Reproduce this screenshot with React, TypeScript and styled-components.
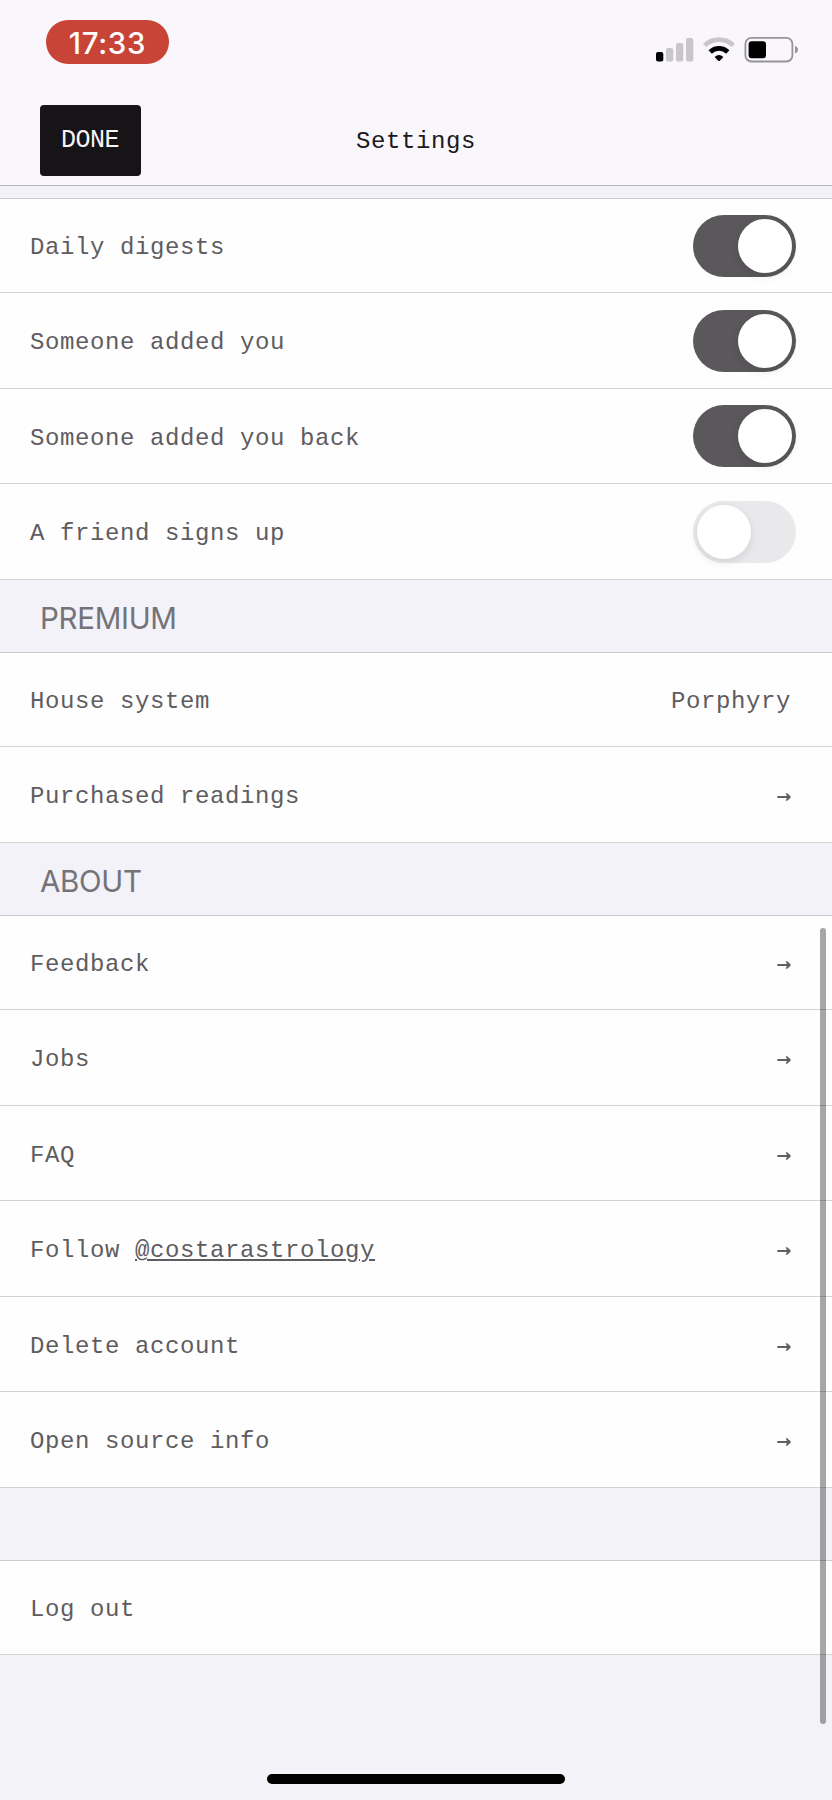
import React from "react";
import styled, { createGlobalStyle } from "styled-components";

const MONO = '"Liberation Mono", "DejaVu Sans Mono", monospace';
const SANS = 'Inter, "Liberation Sans", sans-serif';

const GlobalStyle = createGlobalStyle`
  * { box-sizing: border-box; }
  body { margin: 0; background: #f3f2f9; }
`;

const Screen = styled.div`
  position: relative;
  display: flex;
  flex-direction: column;
  width: 832px;
  height: 1800px;
  overflow: hidden;
  background: #f3f2f9;
`;

const Header = styled.header`
  height: 186px;
  flex: none;
  background: #f9f7fb;
  border-bottom: 1px solid #b5b3bb;
`;

const StatusBar = styled.div`
  display: flex;
  justify-content: space-between;
  align-items: flex-start;
  height: 105px;
  padding: 20px 33px 0 46px;
`;

const TimePill = styled.div`
  display: flex;
  align-items: center;
  justify-content: center;
  width: 123px;
  height: 44px;
  padding-top: 1px;
  border-radius: 22px;
  background: #c74437;
  color: #fff;
  font: 500 29.5px/44px ${SANS};
  letter-spacing: 0.7px;
`;

const StatusIcons = styled.svg`
  display: block;
  margin-top: 16px;
`;

const NavBar = styled.div`
  display: grid;
  grid-template-columns: 101px 1fr 101px;
  align-items: center;
  height: 71px;
  padding: 0 40px;
`;

const DoneButton = styled.button`
  height: 71px;
  padding: 1px 1px 0 0;
  border: 0;
  border-radius: 4px;
  background: #171418;
  color: #f7f5f8;
  font: 25px/28px ${MONO};
  letter-spacing: -0.5px;
`;

const Title = styled.h1`
  margin: 0;
  padding-top: 2px;
  text-align: center;
  color: #1b191d;
  font: 24px/28px ${MONO};
  letter-spacing: 0.58px;
`;

const List = styled.main`
  padding-top: 12px;
`;

const Section = styled.section`
  border-top: 1px solid #cccbd0;
`;

const Row = styled.div<{ $h?: number }>`
  display: flex;
  align-items: center;
  justify-content: space-between;
  height: ${(p) => p.$h ?? 95}px;
  padding: 0 36px 0 30px;
  background: #fefefe;
  border-bottom: 1px solid #d3d2d6;
`;

const Label = styled.span`
  padding-top: 5px;
  color: #5e5c60;
  font: 24px/28px ${MONO};
  letter-spacing: 0.6px;
  white-space: pre;
`;

const Value = styled(Label)`
  margin-right: 5px;
`;

const ArrowIcon = styled.svg`
  display: block;
  margin: 5px 5px 0 0;
  color: #626064;
`;

const Handle = styled.span`
  text-decoration: underline;
  text-decoration-thickness: 2px;
  text-underline-offset: 2px;
`;

const Switch = styled.div<{ $on: boolean }>`
  display: flex;
  justify-content: ${(p) => (p.$on ? "flex-end" : "flex-start")};
  width: 103px;
  height: 62px;
  padding: 4px;
  border-radius: 31px;
  background: ${(p) => (p.$on ? "#5a585b" : "#e9e8eb")};
`;

const Knob = styled.div`
  width: 54px;
  height: 54px;
  border-radius: 50%;
  background: #fff;
  box-shadow: 0 3px 10px rgba(0, 0, 0, 0.1);
`;

const SectionTitle = styled.h2<{ $h: number }>`
  height: ${(p) => p.$h}px;
  margin: 0;
  padding: 20px 0 0 40px;
  color: #747378;
  font: 400 29.5px/36px ${SANS};
  letter-spacing: -0.3px;
`;

const ScrollThumb = styled.div`
  position: absolute;
  top: 928px;
  right: 6px;
  width: 6px;
  height: 796px;
  border-radius: 3px;
  background: rgba(0, 0, 0, 0.345);
`;

const HomeIndicator = styled.div`
  position: absolute;
  left: 267px;
  bottom: 16px;
  width: 298px;
  height: 10px;
  border-radius: 5px;
  background: #000;
`;

const Toggle = ({ on }: { on: boolean }) => (
  <Switch $on={on} role="switch" aria-checked={on}>
    <Knob />
  </Switch>
);

const Arrow = () => (
  <ArrowIcon width="14" height="10" viewBox="0 0 14 10">
    <path d="M0.3 5H11.5" fill="none" stroke="currentColor" strokeWidth="2" />
    <path d="M8.7 1.2H10.2L13.6 4.3V5.7L10.2 8.8H8.7L10.3 5Z" fill="currentColor" />
  </ArrowIcon>
);

const notifications = [
  { label: "Daily digests", on: true, h: 94 },
  { label: "Someone added you", on: true, h: 96 },
  { label: "Someone added you back", on: true, h: 95 },
  { label: "A friend signs up", on: false, h: 96 },
];

const about = [
  { label: "Feedback", h: 94 },
  { label: "Jobs", h: 96 },
  { label: "FAQ", h: 95 },
  { label: "Follow ", handle: "@costarastrology", h: 96 },
  { label: "Delete account", h: 95 },
  { label: "Open source info", h: 96 },
];

export default function App() {
  return (
    <>
      <GlobalStyle />
      <Screen>
        <Header>
          <StatusBar>
            <TimePill>17:33</TimePill>
            <StatusIcons width="144" height="28" viewBox="655 36 144 28">
              <rect x="656" y="52" width="7.3" height="9.4" rx="2" fill="#000" />
              <rect x="666" y="48" width="7.3" height="13.4" rx="2" fill="#c8c6ca" />
              <rect x="676" y="43" width="7.3" height="18.4" rx="2" fill="#c8c6ca" />
              <rect x="686" y="38" width="7.3" height="23.4" rx="2" fill="#c8c6ca" />
              <path d="M704.6 45.4 A20.8 20.8 0 0 1 733.4 45.4" fill="none" stroke="#c8c6ca" strokeWidth="4.6" />
              <path d="M710.2 52 A12.6 12.6 0 0 1 727.8 52" fill="none" stroke="#000" strokeWidth="4.8" />
              <path d="M714.6 57 Q719 53 723.4 57 L719.8 60.7 Q719 61.4 718.2 60.7 Z" fill="#000" />
              <rect x="745.4" y="37.9" width="47" height="23.6" rx="6" fill="none" stroke="#969498" strokeWidth="1.8" />
              <rect x="748.6" y="41.2" width="17.4" height="17" rx="3" fill="#000" />
              <path d="M795 46 Q798 47 798 49.7 Q798 52.4 795 53.4 Z" fill="#969498" />
            </StatusIcons>
          </StatusBar>
          <NavBar>
            <DoneButton>DONE</DoneButton>
            <Title>Settings</Title>
          </NavBar>
        </Header>
        <List>
          <Section>
            {notifications.map((item) => (
              <Row key={item.label} $h={item.h}>
                <Label>{item.label}</Label>
                <Toggle on={item.on} />
              </Row>
            ))}
          </Section>
          <SectionTitle $h={72}>PREMIUM</SectionTitle>
          <Section>
            <Row $h={94}>
              <Label>House system</Label>
              <Value>Porphyry</Value>
            </Row>
            <Row $h={96}>
              <Label>Purchased readings</Label>
              <Arrow />
            </Row>
          </Section>
          <SectionTitle $h={72}>ABOUT</SectionTitle>
          <Section>
            {about.map((item) => (
              <Row key={item.label} $h={item.h}>
                <Label>
                  {item.label}
                  {item.handle && <Handle>{item.handle}</Handle>}
                </Label>
                <Arrow />
              </Row>
            ))}
          </Section>
          <SectionTitle $h={72} as="div" />
          <Section>
            <Row $h={94}>
              <Label>Log out</Label>
            </Row>
          </Section>
        </List>
        <ScrollThumb />
        <HomeIndicator />
      </Screen>
    </>
  );
}
